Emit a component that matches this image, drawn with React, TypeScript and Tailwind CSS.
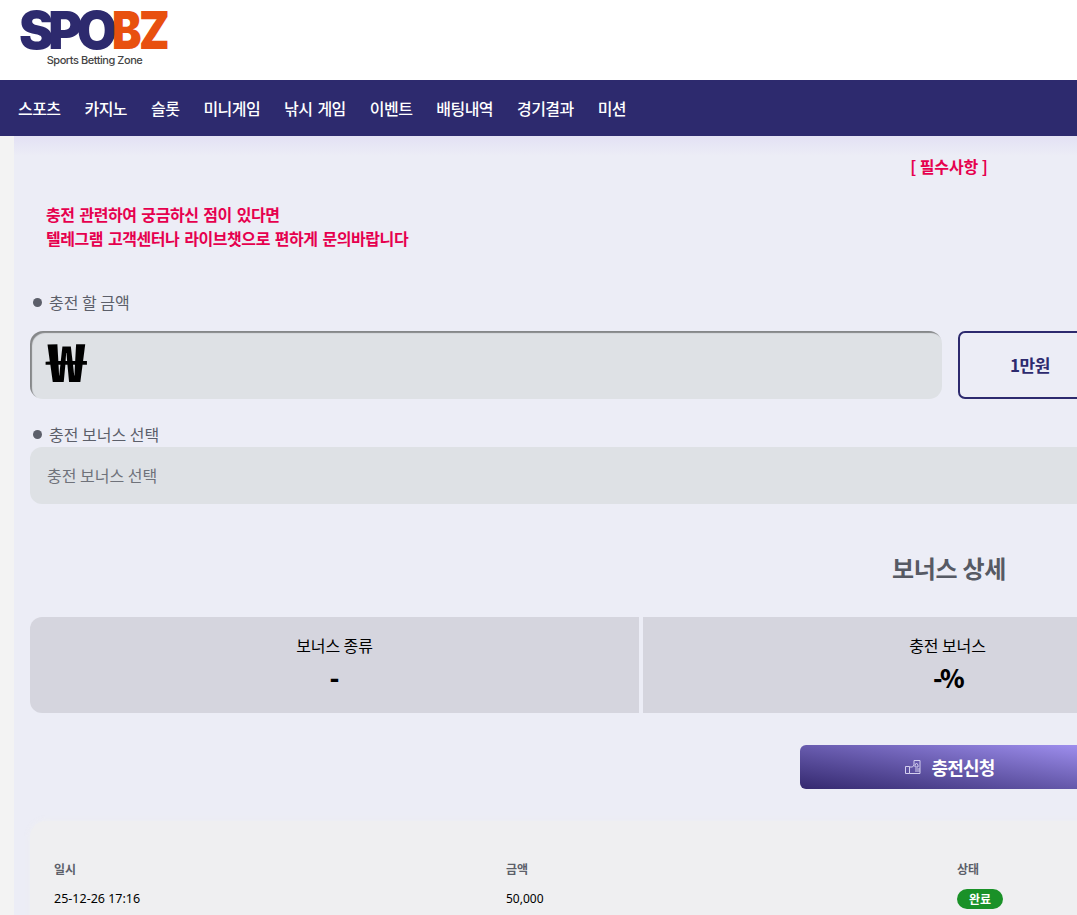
export default function App() {
  const nav = ["스포츠", "카지노", "슬롯", "미니게임", "낚시 게임", "이벤트", "배팅내역", "경기결과", "미션"];
  const font = "font-['Noto_Sans_CJK_KR','Noto_Sans',sans-serif]";
  return (
    <div className={`w-[1077px] h-[915px] overflow-hidden bg-[#f3f3f3] ${font}`}>
      <header className="h-20 bg-white pl-[19px] pt-[11px]">
        <div className="w-[150px] flex flex-col items-center">
          <div className="self-start h-[39px] flex font-['Inter',sans-serif] font-black text-[52px] leading-[39px] whitespace-nowrap">
            <span className="text-[#2d2a6e] tracking-[-5.5px]">SPO</span>
            <span className="text-[#e8500f] tracking-[-3px] inline-block origin-left scale-x-[0.85] -mr-[12px]">BZ</span>
          </div>
          <div className="text-[11px] leading-[16px] text-[#444] font-medium font-['Inter',sans-serif] mt-[2px] pl-[1px] tracking-[-0.45px] whitespace-nowrap">Sports Betting Zone</div>
        </div>
      </header>
      <nav className="h-14 bg-[#2d2a6e] flex items-center pl-[18px] gap-[24px] text-white text-[16px] font-medium tracking-[-0.55px] [word-spacing:2px]">
        {nav.map((n) => (
          <span key={n} className="whitespace-nowrap">{n}</span>
        ))}
      </nav>
      <main className="ml-[14px] h-[779px] bg-[#ecedf6] w-[1900px] relative">
        <div className="h-5 bg-gradient-to-b from-[#e3e1f4] to-[#ecedf6]" />
        <div className="w-[1838px] ml-4">
          <div className="text-center text-[#e6004e] text-[16px] font-bold leading-[22px] -mt-[1px] tracking-[-0.1px]">[ 필수사항 ]</div>
          <div className="pl-4 mt-[25px] text-[#e6004e] text-[16px] font-bold leading-[24px] tracking-[-0.43px] [word-spacing:1.6px]">
            <p>충전 관련하여 궁금하신 점이 있다면</p>
            <p>텔레그램 고객센터나 라이브챗으로 편하게 문의바랍니다</p>
          </div>
          <div className="mt-[40px] flex items-center gap-[7px] text-[#5c5f6a] text-[16px] leading-[24px]">
            <span className="ml-[3px] w-[9px] h-[9px] rounded-full bg-[#5c5f6a]" />
            충전 할 금액
          </div>
          <div className="mt-[17px] flex gap-4">
            <div className="w-[912px] h-[68px] rounded-[13px] bg-[#dee1e5] shadow-[inset_2px_2px_1px_rgba(0,0,0,0.4)] pl-[17px] pb-[11px] flex items-center text-black text-[52px] font-black leading-none">
              <span className="inline-block origin-left scale-x-[1.22]">₩</span>
            </div>
            <div className="w-[144px] h-[68px] pb-px rounded-[7px] border-2 border-[#2d2a6e] flex items-center justify-center text-[#2d2a6e] text-[17px] font-bold tracking-[-0.4px]">1만원</div>
          </div>
          <div className="mt-[23px] flex items-center gap-[7px] text-[#5c5f6a] text-[16px] leading-[24px]">
            <span className="ml-[3px] w-[9px] h-[9px] rounded-full bg-[#5c5f6a]" />
            충전 보너스 선택
          </div>
          <div className="mt-px h-[57px] pb-[2px] rounded-[12px] bg-[#dee1e5] pl-[17px] flex items-center text-[#6f727a] text-[16px]">충전 보너스 선택</div>
          <h2 className="mt-[46px] text-center text-[#565a64] text-[24px] font-bold leading-[36px] tracking-[-0.3px]">보너스 상세</h2>
          <div className="mt-[31px] grid grid-cols-[609px_609px_1fr] gap-1 h-[96px]">
            <div className="bg-[#d5d5de] rounded-l-[12px] flex flex-col items-center pt-[16px] text-black">
              <span className="text-[16px] leading-[24px] tracking-[-0.1px]">보너스 종류</span>
              <span className="text-[26px] leading-[40px] font-black">-</span>
            </div>
            <div className="bg-[#d5d5de] flex flex-col items-center pt-[16px] text-black">
              <span className="text-[16px] leading-[24px] tracking-[-0.1px]">충전 보너스</span>
              <span className="text-[25px] leading-[40px] font-black tracking-[-2.5px]">-%</span>
            </div>
            <div className="bg-[#d5d5de] rounded-r-[12px]" />
          </div>
          <div className="mt-8 flex justify-center">
            <button className="w-[298px] h-[44px] pl-[2px] rounded-[6px] bg-gradient-to-tr from-[#35296f] to-[#a292f2] flex items-center justify-center gap-[10px] text-white text-[18px] font-bold tracking-[-0.8px]">
              <svg width="16" height="16" viewBox="0 0 16 16" fill="none" stroke="#d4cfee" strokeWidth="1">
                <path d="M0.5 7.5h4v7h-4zM4.5 8h3l1.5-2V1.5h6v13h-10.500" />
                <path d="M10 6l1.500-2 1.500 2v2h-3zM10 10h5M10 12h5" />
              </svg>
              충전신청
            </button>
          </div>
          <div className="mt-8 h-[200px] rounded-[16px] bg-[#efeff1] shadow-[0_0_6px_rgba(240,240,242,0.9)] pl-6 pt-[34px]">
            <div className="flex h-[27px] items-center text-[12px] font-bold text-[#5c5f6a]">
              <span className="w-[452px]">일시</span>
              <span className="w-[451px]">금액</span>
              <span>상태</span>
            </div>
            <div className="mt-[2px] flex h-[30px] items-center text-[12px] text-black font-['Noto_Sans',sans-serif]">
              <span className="w-[452px] text-[12.5px]">25-12-26 17:16</span>
              <span className="w-[451px]">50,000</span>
              <span className={`w-[46px] h-5 rounded-full bg-[#1a9128] text-white font-bold flex items-center justify-center ${font}`}>완료</span>
            </div>
          </div>
        </div>
      </main>
    </div>
  );
}
